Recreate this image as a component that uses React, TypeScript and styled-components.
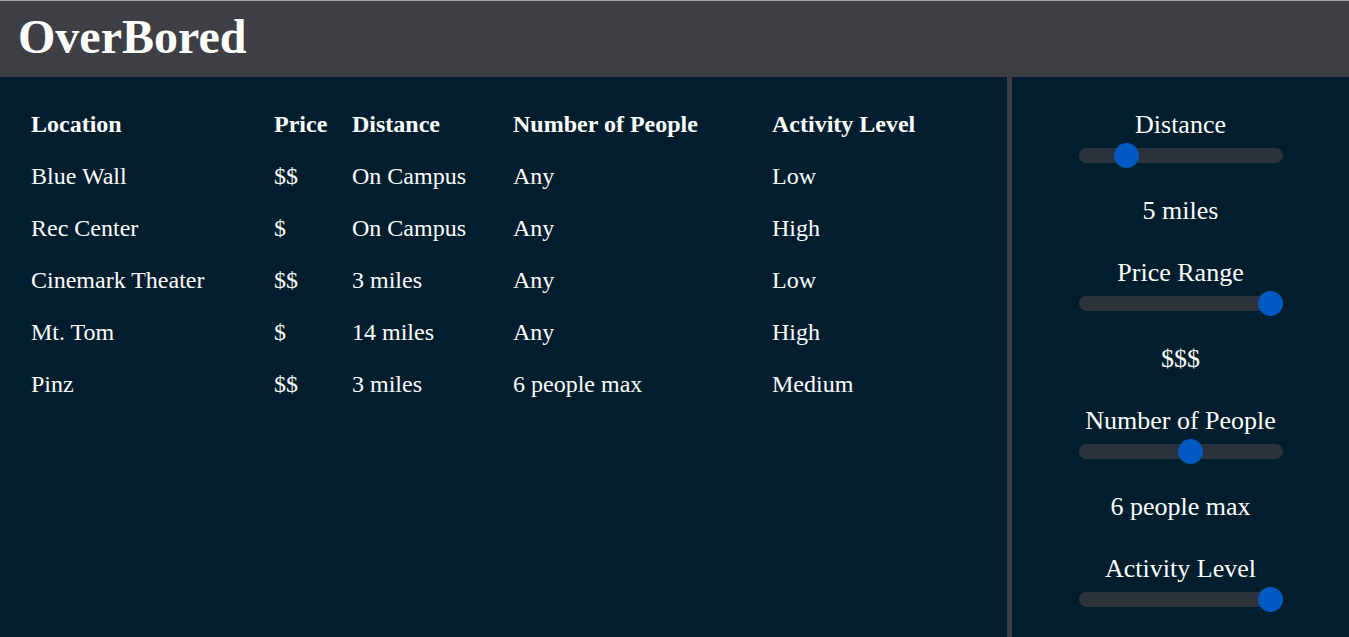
import React from "react";
import styled, { createGlobalStyle } from "styled-components";

const GlobalStyle = createGlobalStyle`
  html, body {
    margin: 0;
    padding: 0;
    background: #011e2f;
    color: #ffffff;
    font-family: "Liberation Serif", "Times New Roman", serif;
  }
`;

const Page = styled.div`
  display: flex;
  flex-direction: column;
  height: 637px;
  overflow: hidden;
  background: #011e2f;
`;

const Header = styled.header`
  height: 76px;
  flex: none;
  border-top: 1px solid #a3a3a6;
  background: #3e3f44;
  display: flex;
  align-items: flex-start;
  padding-left: 18px;
`;

const Title = styled.h1`
  margin: 8px 0 0 0;
  font-size: 48px;
  line-height: 55px;
  font-weight: bold;
  color: #ffffff;
`;

const Main = styled.main`
  flex: 1;
  display: flex;
`;

const ListPanel = styled.section`
  width: 1007px;
  box-sizing: border-box;
  padding: 21px 0 0 31px;
`;

const Divider = styled.div`
  width: 5px;
  background: #3e3f44;
  align-self: stretch;
`;

const FilterPanel = styled.aside`
  flex: 1;
  display: flex;
  flex-direction: column;
  align-items: center;
  gap: 32px;
  padding-top: 33px;
`;

const Table = styled.div`
  display: grid;
  grid-template-columns: 243px 78px 161px 259px auto;
  grid-auto-rows: 52px;
  align-items: center;
`;

const Cell = styled.div<{ $head?: boolean }>`
  font-size: 24px;
  line-height: 27px;
  font-weight: ${(p) => (p.$head ? "bold" : "normal")};
  white-space: nowrap;
`;

const FilterGroup = styled.div`
  display: flex;
  flex-direction: column;
  align-items: center;
`;

const FilterLabel = styled.div`
  font-size: 26px;
  line-height: 30px;
`;

const SliderBox = styled.div`
  position: relative;
  width: 204px;
  height: 25px;
  margin-top: 3px;
  display: flex;
  align-items: center;
`;

const Track = styled.div`
  width: 100%;
  height: 15px;
  border-radius: 8px;
  background: #2c333a;
`;

const Thumb = styled.div`
  position: absolute;
  top: 0;
  width: 25px;
  height: 25px;
  border-radius: 50%;
  background: #0059c1;
`;

const FilterValue = styled.div`
  margin-top: 28px;
  font-size: 26px;
  line-height: 30px;
`;

const headers = ["Location", "Price", "Distance", "Number of People", "Activity Level"];

const rows = [
  ["Blue Wall", "$$", "On Campus", "Any", "Low"],
  ["Rec Center", "$", "On Campus", "Any", "High"],
  ["Cinemark Theater", "$$", "3 miles", "Any", "Low"],
  ["Mt. Tom", "$", "14 miles", "Any", "High"],
  ["Pinz", "$$", "3 miles", "6 people max", "Medium"],
];

const filters = [
  { label: "Distance", fraction: 0.2, value: "5 miles" },
  { label: "Price Range", fraction: 1, value: "$$$" },
  { label: "Number of People", fraction: 5 / 9, value: "6 people max" },
  { label: "Activity Level", fraction: 1, value: "" },
];

const Slider: React.FC<{ fraction: number }> = ({ fraction }) => (
  <SliderBox>
    <Track />
    <Thumb style={{ left: `${fraction * (204 - 25)}px` }} />
  </SliderBox>
);

export default function App() {
  return (
    <>
      <GlobalStyle />
      <Page>
        <Header>
          <Title>OverBored</Title>
        </Header>
        <Main>
          <ListPanel>
            <Table>
              {headers.map((h) => (
                <Cell key={h} $head>
                  {h}
                </Cell>
              ))}
              {rows.map((r) =>
                r.map((c, i) => <Cell key={r[0] + i}>{c}</Cell>)
              )}
            </Table>
          </ListPanel>
          <Divider />
          <FilterPanel>
            {filters.map((f) => (
              <FilterGroup key={f.label}>
                <FilterLabel>{f.label}</FilterLabel>
                <Slider fraction={f.fraction} />
                {f.value && <FilterValue>{f.value}</FilterValue>}
              </FilterGroup>
            ))}
          </FilterPanel>
        </Main>
      </Page>
    </>
  );
}
